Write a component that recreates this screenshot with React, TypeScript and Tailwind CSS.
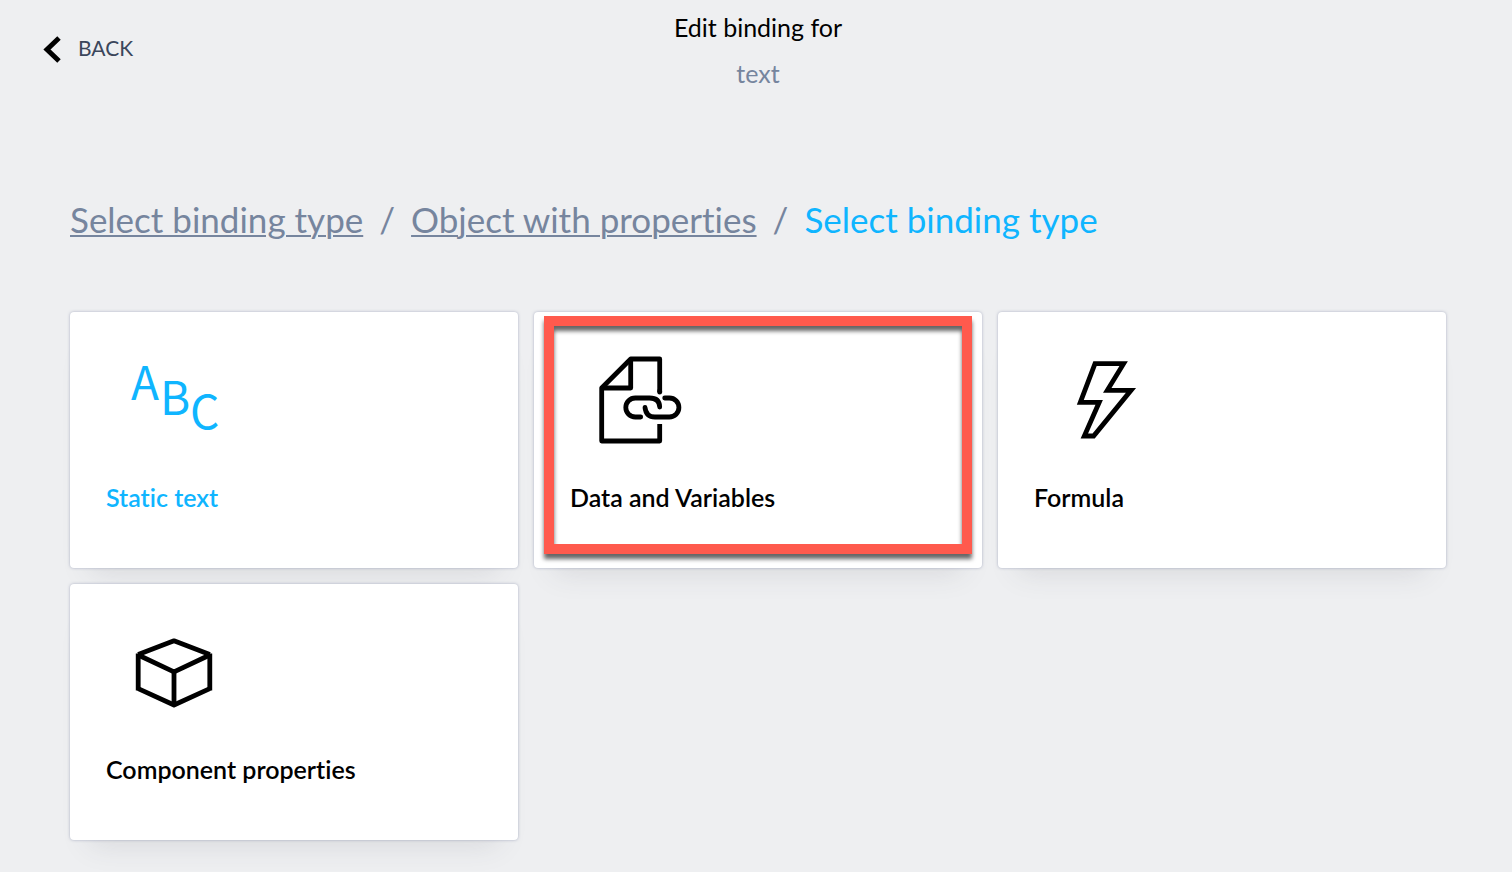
import type { ReactNode } from "react";

function StaticTextIcon() {
  return (
    <svg viewBox="0 0 96 96" className="size-24 overflow-visible" fill="currentColor" fontFamily="'Noto Sans CJK SC', sans-serif" fontSize="46" aria-hidden="true">
      <text x="5" y="48">A</text>
      <text x="34" y="63">B</text>
      <text x="64" y="76.5">C</text>
    </svg>
  );
}

function DataIcon() {
  return (
    <svg viewBox="0 0 96 96" className="size-24" fill="none" stroke="currentColor" strokeWidth="4.8" strokeLinejoin="round" aria-hidden="true">
      <path d="M69.7 72V89H11.7V36L40.7 7H69.7V40" />
      <path d="M69.7 39V40.2" strokeLinecap="round" />
      <path d="M40.7 7V36H11.7" />
      <path d="M50.7 65H45.3a9.5 9.5 0 0 1 0-19H59.5Q69.5 46 69.7 55" strokeLinecap="round" />
      <path d="M55 55.5Q56 65 65 65H79.4a9.5 9.5 0 0 0 0-19H74.7" strokeLinecap="round" />
    </svg>
  );
}

function FormulaIcon() {
  return (
    <svg viewBox="0 0 96 96" className="size-24" fill="none" stroke="currentColor" strokeWidth="4.8" strokeMiterlimit="10" aria-hidden="true">
      <path d="M41 11.7H69.6L53.3 38.3H77L39.6 84H30.3L45.2 50.3H26.3Z" />
    </svg>
  );
}

function ComponentIcon() {
  return (
    <svg viewBox="0 0 96 96" className="size-24" fill="none" stroke="currentColor" strokeWidth="4.8" aria-hidden="true">
      <path d="M12.2 30.5L48 16.8L83.8 30.5" strokeLinejoin="round" />
      <path d="M12.2 31L48 47.8L83.8 31" />
      <path d="M12.2 64.6L48 81L83.8 64.6" strokeLinejoin="round" />
      <path d="M12.2 29.5V66.5M83.8 29.5V66.5M48 48V81" />
    </svg>
  );
}

type CardProps = { label: string; icon: ReactNode; active?: boolean; highlighted?: boolean };

function BindingCard({ label, icon, active, highlighted }: CardProps) {
  return (
    <button
      type="button"
      className={`relative flex h-64 flex-col items-start rounded bg-white px-9 pt-10 text-left shadow-[0_0_3px_rgba(100,110,150,0.5),0_24px_28px_-20px_rgba(60,65,80,0.13)] ${active ? "text-[#0fb5ff]" : "text-black"}`}
    >
      <span className="ml-5">{icon}</span>
      <span className="mt-[31px] text-[25px] leading-9 font-semibold">{label}</span>
      {highlighted && (
        <span className="pointer-events-none absolute inset-x-2.5 top-1 bottom-3.5 border-10 border-[#ff5a4d] drop-shadow-[0_5px_2px_rgba(0,0,0,0.6)]" />
      )}
    </button>
  );
}

export default function App() {
  return (
    <div className="min-h-screen bg-[#eeeff1] pb-8 font-['Lato',sans-serif] text-black [font-variant-ligatures:none]">
      <header className="grid grid-cols-[1fr_auto_1fr] items-start pt-[9px] pr-[38px] pl-[42px]">
        <button type="button" className="mt-[21px] flex items-center gap-4 justify-self-start text-[21px] leading-9 text-[#3b465b]">
          <svg viewBox="0 0 20 30" className="h-[30px] w-5 text-black" fill="none" stroke="currentColor" strokeWidth="5" aria-hidden="true">
            <path d="M17 5L5 16.5L17 28" />
          </svg>
          BACK
        </button>
        <div className="text-center text-[25px]">
          <h1 className="leading-9">Edit binding for</h1>
          <p className="mt-2.5 leading-9 text-[#76859e]">text</p>
        </div>
      </header>
      <main className="pt-[104px] pr-[66px] pl-[70px]">
        <nav aria-label="Breadcrumb" className="flex flex-wrap gap-x-4 text-[35px] leading-12 text-[#76859e]">
          <a href="#type" className="underline decoration-2 underline-offset-2">Select binding type</a>
          <span>/</span>
          <a href="#object" className="underline decoration-2 underline-offset-2">Object with properties</a>
          <span>/</span>
          <span className="text-[#0fb5ff]" aria-current="page">Select binding type</span>
        </nav>
        <section className="mt-[69px] grid grid-cols-3 gap-4">
          <BindingCard label="Static text" icon={<StaticTextIcon />} active />
          <BindingCard label="Data and Variables" icon={<DataIcon />} highlighted />
          <BindingCard label="Formula" icon={<FormulaIcon />} />
          <BindingCard label="Component properties" icon={<ComponentIcon />} />
        </section>
      </main>
    </div>
  );
}
